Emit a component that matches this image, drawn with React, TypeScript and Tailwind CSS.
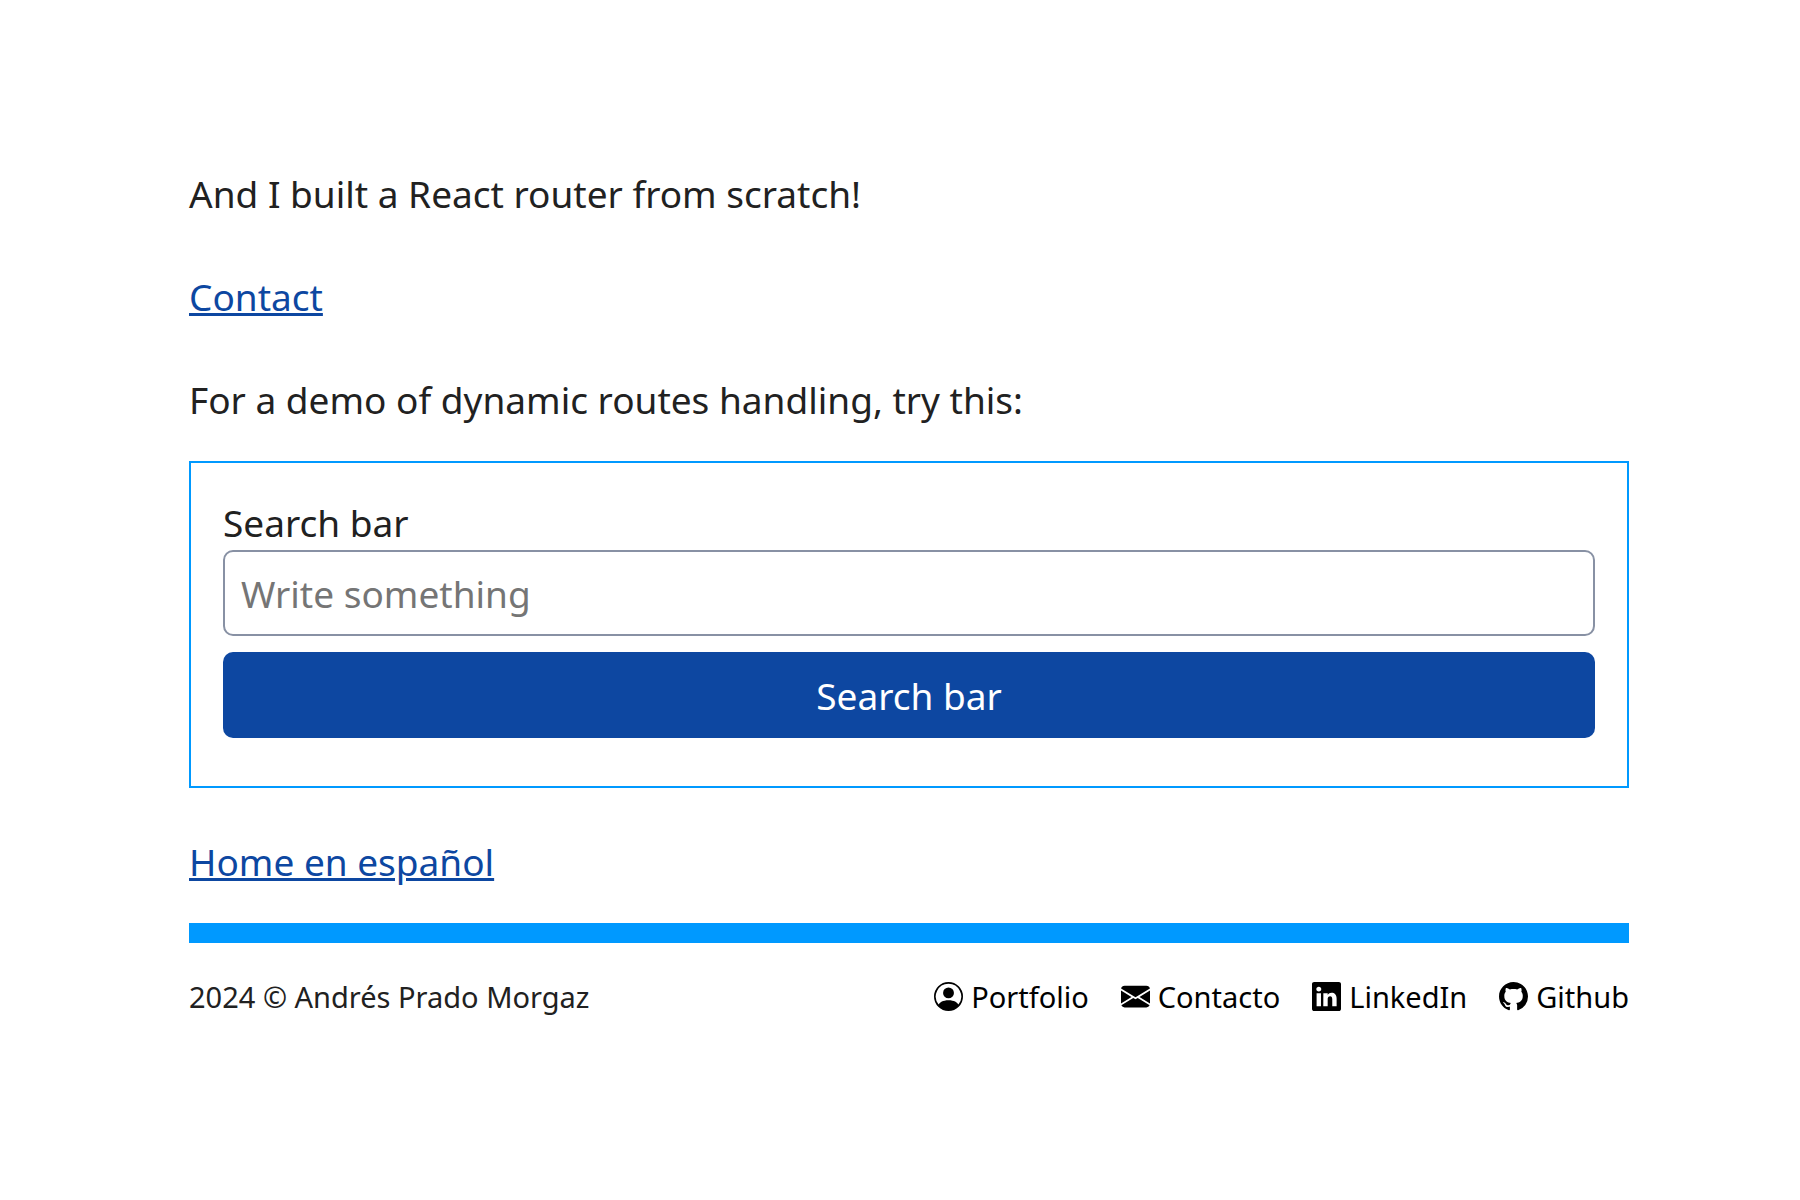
import { BsPersonCircle, BsEnvelopeFill, BsLinkedin, BsGithub } from "react-icons/bs";

const links = [
  { label: "Portfolio", Icon: BsPersonCircle },
  { label: "Contacto", Icon: BsEnvelopeFill },
  { label: "LinkedIn", Icon: BsLinkedin },
  { label: "Github", Icon: BsGithub },
];

export default function App() {
  return (
    <div className="min-h-screen bg-white font-['Noto_Sans',sans-serif] text-[37px] leading-[55px] text-[#212121]">
      <div className="ml-[10.5%] w-4/5 pt-[166px]">
        <main>
          <p>And I built a React router from scratch!</p>
          <p className="mt-12">
            <a href="#contact" className="text-[#0d47a1] underline">Contact</a>
          </p>
          <p className="mt-12">For a demo of dynamic routes handling, try this:</p>
          <form className="mt-[34px] flex flex-col border-2 border-[#0099ff] px-8 pt-8 pb-12" onSubmit={(e) => e.preventDefault()}>
            <label htmlFor="search">Search bar</label>
            <input id="search" type="text" placeholder="Write something" className="h-[86px] rounded-[10px] border-2 border-[#8891a4] px-4 placeholder:text-[#757575]" />
            <button type="submit" className="mt-4 h-[86px] rounded-[10px] bg-[#0d47a1] text-white">Search bar</button>
          </form>
          <p className="mt-[46px]">
            <a href="#es" className="text-[#0d47a1] underline">Home en español</a>
          </p>
        </main>
        <footer className="mt-[34px] flex items-center justify-between border-t-[20px] border-[#0099ff] pt-8 text-[29px] leading-[43px]">
          <p>2024 © Andrés Prado Morgaz</p>
          <nav className="flex gap-8 text-black">
            {links.map(({ label, Icon }) => (
              <a key={label} href={"#" + label.toLowerCase()} className="flex items-center gap-2">
                <Icon aria-hidden="true" />
                {label}
              </a>
            ))}
          </nav>
        </footer>
      </div>
    </div>
  );
}
